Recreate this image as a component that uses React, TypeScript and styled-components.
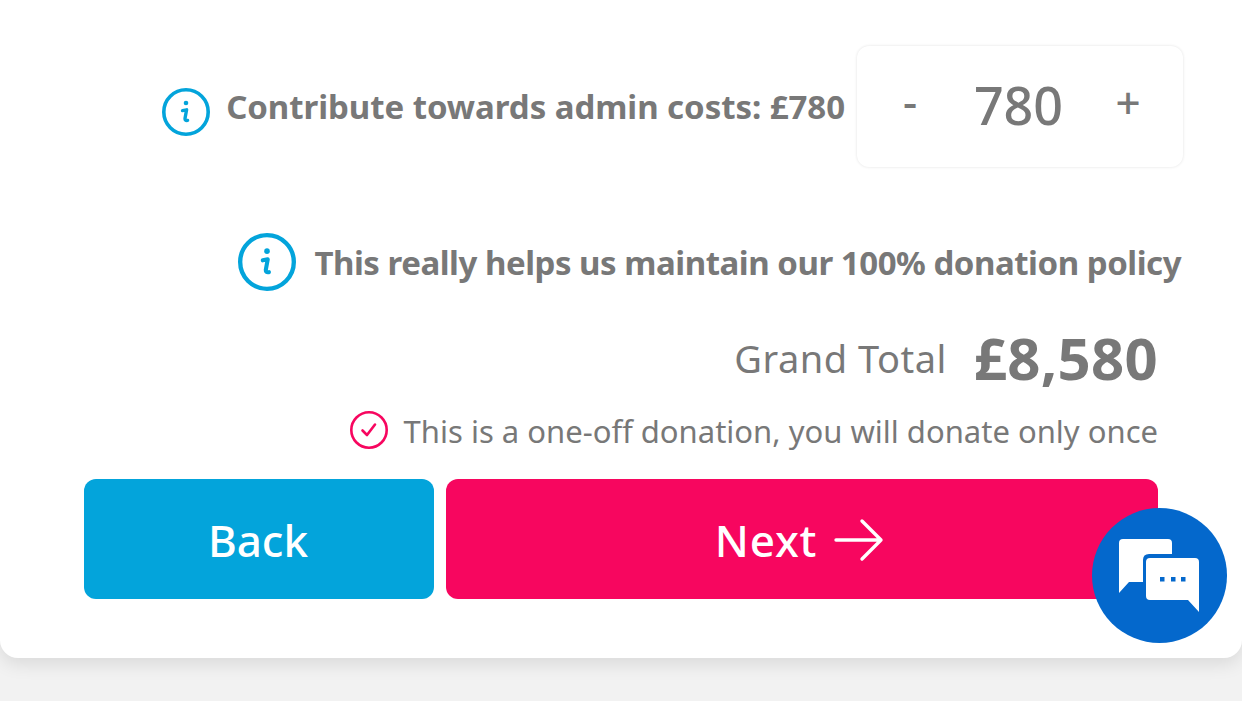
import React from "react";
import styled, { createGlobalStyle } from "styled-components";

const GlobalStyle = createGlobalStyle`
  html, body {
    margin: 0;
    padding: 0;
    background: #f2f2f2;
    font-family: "Noto Sans", "Open Sans", sans-serif;
    overflow: hidden;
  }
`;

const Page = styled.div`
  width: 1242px;
  height: 701px;
  position: relative;
  overflow: hidden;
`;

const Card = styled.section`
  box-sizing: border-box;
  height: 658px;
  padding: 46px 84px 59px 84px;
  background: #fff;
  border-radius: 0 0 18px 18px;
  box-shadow: 0 6px 18px rgba(0, 0, 0, 0.1);
  display: flex;
  flex-direction: column;
  align-items: flex-end;
`;

const Row = styled.div<{ $top: number; $right?: number; $gap: number }>`
  display: flex;
  align-items: center;
  gap: ${(p) => p.$gap}px;
  margin-top: ${(p) => p.$top}px;
  margin-right: ${(p) => p.$right ?? 0}px;
`;

const Label = styled.span<{ $spacing: number; $lift?: number }>`
  font-size: 33px;
  font-weight: 700;
  color: #787878;
  letter-spacing: ${(p) => p.$spacing}px;
  white-space: nowrap;
  margin-bottom: ${(p) => p.$lift ?? 0}px;
`;

const Stepper = styled.div`
  box-sizing: border-box;
  width: 326px;
  height: 121px;
  border-radius: 12px;
  background: #fff;
  box-shadow: 0 0 3px rgba(0, 0, 0, 0.12);
  display: grid;
  grid-template-columns: 108px 1fr 108px;
  align-items: center;
  justify-items: center;
  color: #787878;
  padding-bottom: 3px;
`;

const StepSign = styled.span<{ $shift: number }>`
  font-size: 44px;
  font-weight: 500;
  line-height: 1;
  padding-bottom: ${(p) => p.$shift}px;
  margin-left: -2px;
`;

const StepValue = styled.span`
  font-size: 52px;
  font-weight: 500;
  line-height: 1;
  margin-left: -3px;
`;

const TotalLabel = styled.span`
  font-size: 38px;
  color: #787878;
  white-space: nowrap;
  letter-spacing: 0.5px;
`;

const TotalValue = styled.span`
  font-size: 58px;
  font-weight: 700;
  color: #787878;
  line-height: 70px;
  letter-spacing: 0.3px;
  white-space: nowrap;
`;

const Note = styled.span`
  font-size: 31px;
  color: #787878;
  white-space: nowrap;
  padding-top: 2px;
`;

const Actions = styled.div`
  align-self: stretch;
  display: grid;
  grid-template-columns: 350px 712px;
  gap: 12px;
  margin-top: 27px;
`;

const ActionButton = styled.button<{ $bg: string; $inset: number; $spacing?: number }>`
  height: 120px;
  border: 0;
  border-radius: 12px;
  background: ${(p) => p.$bg};
  color: #fff;
  font-family: inherit;
  font-size: 44px;
  font-weight: 500;
  letter-spacing: ${(p) => p.$spacing ?? 0}px;
  display: flex;
  align-items: center;
  justify-content: center;
  gap: 17px;
  padding: 2px ${(p) => p.$inset}px 0 0;
`;

const ChatBubble = styled.div`
  position: absolute;
  left: 1092px;
  top: 508px;
  width: 135px;
  height: 135px;
  border-radius: 50%;
  background: #0468cc;
  display: flex;
  align-items: center;
  justify-content: center;
`;

const InfoIcon = ({ size }: { size: number }) => (
  <svg width={size} height={size} viewBox="0 0 48 48" fill="none">
    <circle cx="24" cy="24" r="22.2" stroke="#03a4db" strokeWidth="3.6" />
    <circle cx="24" cy="15" r="2.3" fill="#03a4db" />
    <path
      d="M20.5 22.6 L24.6 21.8 L23 30.5 Q22.8 33 25.6 32.4"
      stroke="#03a4db"
      strokeWidth="3.4"
      strokeLinecap="round"
      strokeLinejoin="round"
    />
  </svg>
);

const CheckIcon = () => (
  <svg width="38" height="38" viewBox="0 0 38 38" fill="none">
    <circle cx="19" cy="19" r="17.7" stroke="#f7065f" strokeWidth="2.6" />
    <path
      d="M12.5 19.5 L17 24 L25 13.5"
      stroke="#f7065f"
      strokeWidth="2.6"
      strokeLinecap="round"
      strokeLinejoin="round"
    />
  </svg>
);

const ArrowIcon = () => (
  <svg width="50" height="44" viewBox="0 0 50 44" fill="none">
    <path
      d="M2 22 H47 M28 3 L47 22 L28 41"
      stroke="#fff"
      strokeWidth="3.4"
      strokeLinecap="round"
      strokeLinejoin="round"
    />
  </svg>
);

const ChatIcon = () => (
  <svg width="82" height="74" viewBox="0 0 82 74">
    <path
      d="M4 0 H49 Q53 0 53 4 V15 H30 Q24 15 24 21 V43 H10 L0 54 V4 Q0 0 4 0 Z"
      fill="#fff"
    />
    <path
      d="M31 19 H76 Q80 19 80 23 V73 L69 61 H31 Q27 61 27 57 V23 Q27 19 31 19 Z"
      fill="#fff"
    />
    <rect x="41" y="38" width="4.5" height="4.5" fill="#0468cc" />
    <rect x="52" y="38" width="4.5" height="4.5" fill="#0468cc" />
    <rect x="62" y="38" width="4.5" height="4.5" fill="#0468cc" />
  </svg>
);

export default function App() {
  return (
    <Page>
      <GlobalStyle />
      <Card>
        <Row $top={0} $right={-25} $gap={12}>
          <Row $top={10} $gap={16}>
            <InfoIcon size={48} />
            <Label $spacing={-0.05} $lift={10}>
              Contribute towards admin costs: £780
            </Label>
          </Row>
          <Stepper>
            <StepSign $shift={8}>-</StepSign>
            <StepValue>780</StepValue>
            <StepSign $shift={6}>+</StepSign>
          </Stepper>
        </Row>
        <Row $top={66} $right={-23} $gap={18}>
          <InfoIcon size={58} />
          <Label $spacing={-0.47}>
            This really helps us maintain our 100% donation policy
          </Label>
        </Row>
        <Row $top={32} $gap={27}>
          <TotalLabel>Grand Total</TotalLabel>
          <TotalValue>£8,580</TotalValue>
        </Row>
        <Row $top={15} $gap={16}>
          <CheckIcon />
          <Note>This is a one-off donation, you will donate only once</Note>
        </Row>
        <Actions>
          <ActionButton $bg="#03a4db" $inset={2}>
            Back
          </ActionButton>
          <ActionButton $bg="#f7065f" $inset={5} $spacing={0.75}>
            Next
            <ArrowIcon />
          </ActionButton>
        </Actions>
      </Card>
      <ChatBubble>
        <ChatIcon />
      </ChatBubble>
    </Page>
  );
}
